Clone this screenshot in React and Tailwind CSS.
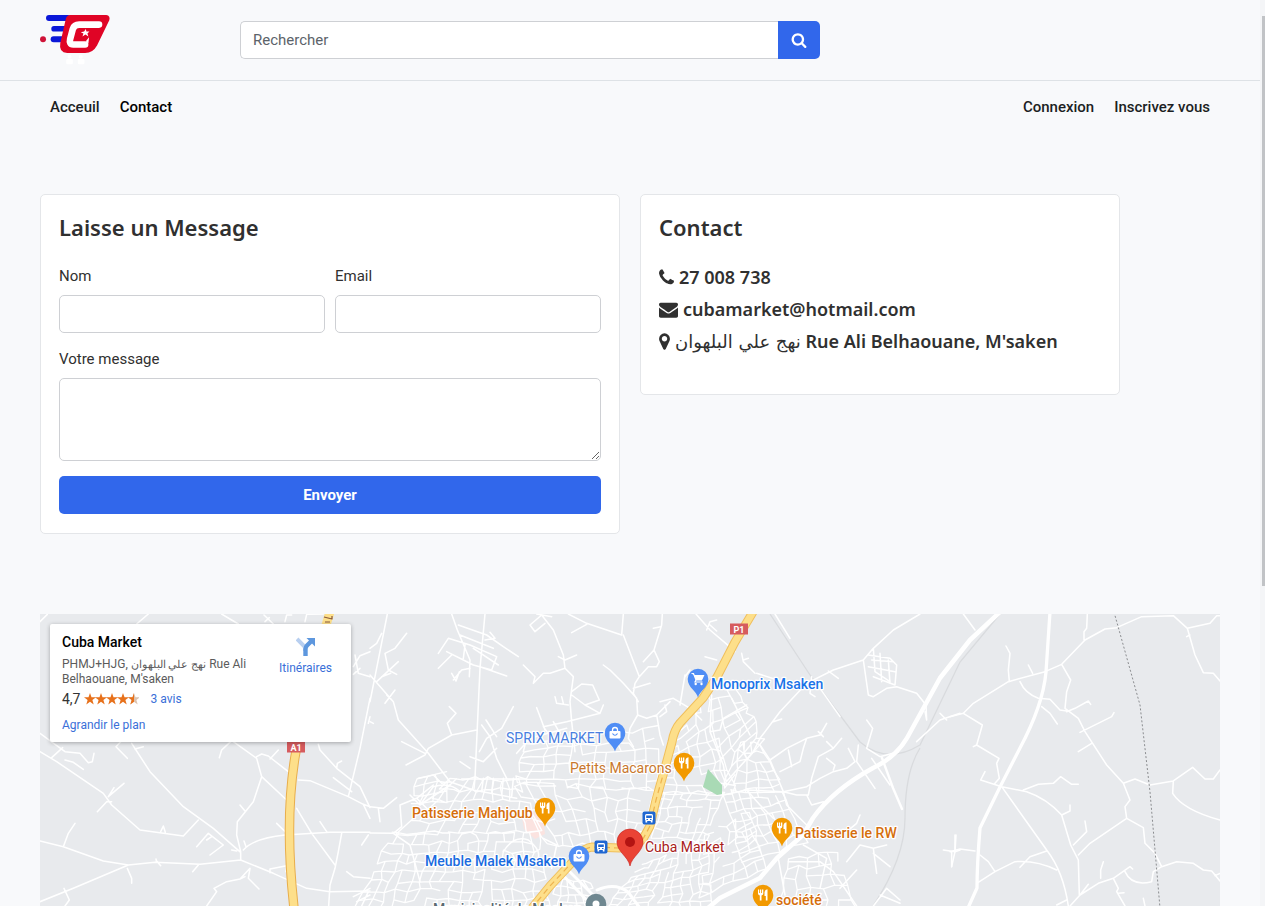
import React from "react";

const ICONS = {
  search: {
    box: "0 0 1792 1792",
    d: "M1216 832q0-185-131.500-316.500t-316.500-131.500-316.500 131.500-131.500 316.500 131.500 316.500 316.500 131.500 316.500-131.500 131.500-316.500zm512 832q0 52-38 90t-90 38q-54 0-90-38l-343-342q-179 124-399 124-143 0-273.500-55.500t-225-150-150-225-55.500-273.500 55.500-273.500 150-225 225-150 273.500-55.500 273.500 55.500 225 150 150 225 55.500 273.500q0 220-124 399l343 343q37 37 37 90z",
  },
  phone: {
    box: "192 0 1408 1792",
    d: "M1600 1240q0 27-10 70.500t-21 68.500q-21 50-122 106-94 51-186 51-27 0-53-3.500t-57.500-12.500-47-14.500-55.500-20.500-49-18q-98-35-175-83-127-79-264-216t-216-264q-48-77-83-175-3-9-18-49t-20.500-55.500-14.500-47-12.500-57.500-3.500-53q0-92 51-186 56-101 106-122 25-11 68.500-21t70.500-10q14 0 21 3 18 6 53 76 11 19 30 54t35 63.500 31 53.500q3 4 17.500 25t21.500 35.500 7 28.500q0 20-28.500 50t-62 55-62 53-28.500 46q0 9 5 22.500t8.500 20.500 14 24 11.500 19q76 137 174 235t235 174q2 1 19 11.500t24 14 20.500 8.500 22.500 5q18 0 46-28.500t53-62 55-62 50-28.500q14 0 28.500 7t35.500 21.500 25 17.500q25 15 53.500 31t63.500 35 54 30q70 35 76 53 3 7 3 21z",
  },
  envelope: {
    box: "0 0 1792 1792",
    d: "M1792 710v794q0 66-47 113t-113 47h-1472q-66 0-113-47t-47-113v-794q44 49 101 87 362 246 497 345 57 42 92.500 65.500t94.500 48 110 24.500h2q51 0 110-24.500t94.500-48 92.500-65.500q170-123 498-345 57-39 100-87zm0-294q0 79-49 151t-122 123q-376 261-468 325-10 7-42.500 31t-54 38.500-52 32.500-57.500 27-50 9h-2q-23 0-50-9t-57.500-27-52-32.500-54-38.500-42.500-31q-91-64-262-182.500t-205-142.500q-62-42-117-115.500t-55-136.500q0-78 41.500-130t118.500-52h1472q65 0 112.500 47t47.500 113z",
  },
  marker: {
    box: "0 0 1024 1792",
    d: "M768 640q0 106-75 181t-181 75-181-75-75-181 75-181 181-75 181 75 75 181zm256 0q0 109-33 179l-364 774q-16 33-47.500 52t-67.500 19-67.500-19-46.500-52l-365-774q-33-70-33-179 0-212 150-362t362-150 362 150 150 362z",
  },
};

function Icon({ name, className }) {
  return (
    <svg viewBox={ICONS[name].box} className={className} fill="currentColor" fillRule="evenodd" aria-hidden="true">
      <path d={ICONS[name].d} />
    </svg>
  );
}

function Logo() {
  return (
    <svg viewBox="12 18 214 160" className="h-[53px] w-[71px]" role="img" aria-label="Cuba Market">
      <g fill="#0b18d8">
        <rect x="30" y="21" width="75" height="18" rx="9" />
        <rect x="46" y="54" width="50" height="17" rx="8" />
        <rect x="44" y="85" width="50" height="18" rx="9" />
      </g>
      <circle cx="21" cy="94" r="9" fill="#cf1237" />
      <path d="M102 21H212Q225 23 221 37L184 113Q172 135 148 136H94Q68 134 73 106L89 36Q91 22 102 21Z" fill="#e00425" />
      <path d="M190 50H130Q115 50 111 63L103 93Q99 110 112 110H148" fill="none" stroke="#fff" strokeWidth="20" strokeLinecap="round" strokeLinejoin="round" />
      <path d="M150 100L160 88L158 106Z" fill="#fff" />
      <path d="M150 63L152 71L161 71L155 77L158 86L149 80L140 86L143 77L135 73L145 71Z" fill="#fff" />
      <g fill="#fff">
        <circle cx="101" cy="147" r="6" />
        <circle cx="135" cy="147" r="6" />
        <rect x="91" y="154" width="20" height="16" rx="4" />
        <rect x="126" y="154" width="20" height="16" rx="4" />
      </g>
    </svg>
  );
}

/* Street mesh: a jittered grid stretched over a quadrilateral. */
function mesh([a, b, c, d], cols, rows, seed) {
  const rand = (i, j, k) => {
    const s = Math.sin(i * 127.1 + j * 311.7 + k * 74.7 + seed * 53.3) * 43758.5453;
    return s - Math.floor(s);
  };
  const at = (i, j) => {
    const u = (i + (rand(i, j, 1) - 0.5) * 0.5) / cols;
    const v = (j + (rand(i, j, 2) - 0.5) * 0.5) / rows;
    const mix = (n) => (1 - v) * ((1 - u) * a[n] + u * b[n]) + v * ((1 - u) * d[n] + u * c[n]);
    return mix(0).toFixed(1) + " " + mix(1).toFixed(1);
  };
  let path = "";
  for (let i = 0; i <= cols; i++) {
    for (let j = 0; j <= rows; j++) {
      if (i < cols && rand(i, j, 3) > 0.14) path += "M" + at(i, j) + "L" + at(i + 1, j);
      if (j < rows && rand(i, j, 4) > 0.26) path += "M" + at(i, j) + "L" + at(i, j + 1);
    }
  }
  return path;
}

const STREETS = [
  mesh([[450, 778], [520, 780], [540, 832], [396, 834]], 11, 5, 1),
  mesh([[390, 834], [540, 832], [548, 910], [356, 910]], 17, 8, 2),
  mesh([[524, 744], [656, 728], [658, 790], [514, 784]], 11, 6, 3),
  mesh([[514, 784], [658, 790], [640, 842], [548, 846]], 11, 5, 4),
  mesh([[676, 730], [706, 690], [735, 795], [658, 792]], 5, 9, 5),
  mesh([[706, 690], [738, 690], [762, 742], [724, 792]], 3, 9, 6),
  mesh([[658, 792], [724, 792], [706, 842], [645, 836]], 8, 6, 7),
  mesh([[724, 792], [778, 786], [806, 842], [742, 862]], 7, 7, 8),
  mesh([[706, 836], [748, 812], [768, 868], [700, 896]], 6, 6, 9),
  mesh([[640, 866], [706, 838], [712, 910], [604, 910]], 10, 8, 10),
  mesh([[788, 858], [836, 852], [856, 910], [782, 910]], 5, 5, 11),
  mesh([[740, 740], [760, 745], [784, 790], [735, 792]], 4, 5, 12),
  mesh([[556, 878], [590, 882], [606, 910], [548, 910]], 6, 4, 13),
  mesh([[418, 778], [445, 772], [450, 800], [408, 806]], 3, 3, 14),
].join("");

const WEST =
  "M0 440L50 470L190 565L215 600L300 675L430 693L475 645M0 385L75 440L120 445L145 473L157 470L162 445M75 465L100 472L130 493M35 458L68 428M275 415L330 500L430 605L520 670L602 742V765M242 410L228 425L262 460M285 432L310 425M172 620L200 590M205 575L252 535M205 575L222 548M200 590H215M0 708L70 725L190 768L265 780L345 772L480 778L602 765L700 805L800 850L870 860L990 858M265 780L100 850L0 890M262 790L275 820V835M72 850L88 885L75 903M70 725L85 685L105 655M602 740L590 690L592 650L640 590L665 515L650 460L580 410M538 458L545 435L572 410M650 455L665 447L685 453L745 500M690 462L715 435M665 515L740 585M770 610L815 685L885 780M905 685L895 740L885 790L870 840L866 903M610 735Q640 700 735 690L870 682H990M775 525L810 527L925 575L970 598L990 605M925 575L960 430L990 280M835 418L840 435L890 490L960 545L990 608M880 518L935 560M890 490L892 475L905 468M970 598L990 640M500 903L530 860L522 850L560 830L600 822L630 790L625 820L657 852M600 822L615 815M690 803V792L740 782L738 800M470 725L505 685L550 720L510 750M500 705L515 695M458 800L475 780M348 762L350 772M362 680L370 663L376 682M710 655L738 682M840 650L860 680M600 600L615 618M590 738L575 735M612 708L618 725M0 50L22 28M290 57L325 27M545 27L595 57M672 30L700 57M675 50L688 38M735 50L740 30L755 30M795 50L800 28L850 27M945 150L955 205L990 215M940 185L960 152L990 140M940 208L960 190M990 335L985 355M965 720L985 690M940 875L990 850M950 890L990 870M965 903L985 860M920 800L940 815L990 820M362 782L350 768";

const CENTRE =
  "M52 27L15 215L0 290M110 85L75 130L45 145L55 195L80 208M20 230L85 170M35 215L62 205M45 295L75 255M50 270L65 285M0 210L70 290L85 345L175 445L240 530L310 555L440 580M0 130L20 115L35 85M345 27L330 190L315 520L312 550M245 27L262 75L300 165L298 215M265 60L350 90L400 125L445 155M205 145L235 100L300 120L380 155L365 195L310 180L230 140M205 190L245 150M250 225L275 195L300 190M270 90L370 130M330 185L410 213M245 205L258 228L268 200M360 82L375 100L345 105M310 130L385 180M285 120L280 160M480 60L515 30L550 75L580 150L585 190L610 215L600 290L605 350L615 440M480 60L495 80L525 55M500 27L545 35M585 190L540 205L520 205L490 235L495 215L460 180M565 155L585 165L620 150M605 260L635 237L668 240L688 285L645 300L605 270M645 300L690 325L590 350L520 365M690 325L700 300M595 27L650 55L755 90L760 27M605 83L650 58M760 90L808 215M877 27L875 60L852 135L868 170L860 185L835 185L808 215L795 235L790 265L805 290M852 135L820 170M850 70L872 65M700 180L720 195L760 235L800 280L803 330L780 370L775 400L790 425M790 250L840 235M555 275L560 295L595 300M575 275L580 295M430 305L395 370L350 400L328 440M238 305L258 325L232 355L245 390L175 430L165 450L108 480M95 410L165 445M245 390L320 375M335 360L360 395L380 460L410 520M300 455L340 470L380 430M348 345L380 395M275 522H470M145 520L190 510L215 535L240 530M270 470L300 490M0 605L40 610L80 578M0 684L70 685L95 665L90 600L140 580L190 540M30 650L25 610M70 685L120 720L150 830M0 350L10 355M803 330L830 340L860 330L900 290M860 330L870 390L880 420M500 308L512 340M512 340L525 375M120 570L150 600L190 545Q240 530 270 560M150 600L240 540M140 580L180 620M400 740Q430 690 475 705Q520 740 500 770M520 700L560 720L545 790M440 445L480 400L590 370M470 400L460 440M520 365L545 400M550 350L570 385M340 520L335 560M370 520L365 565M400 520L395 570M430 520L425 575";

const EAST =
  "M780 27L700 75L640 130L610 165L520 195L440 235L360 320L300 400L280 440L190 540M345 27L390 100M455 215L450 265L465 275M505 198L535 220M480 250L540 335M610 165L625 270L640 275L680 250L710 245L770 265L798 300L800 345M625 150L690 160L710 180L705 240L640 215M640 130L645 200L690 230M660 145L665 230M625 185L705 200M635 165L700 170M685 165L690 235M800 345L795 320M900 325L840 345L770 410M840 325L860 345M620 345L638 370L620 430L660 455L715 440M340 350L365 342M108 27L150 75L215 130L225 140M140 75L150 50L170 45M150 60L170 78M135 155L170 165M245 145L250 170L285 205M250 165L265 160M290 205L400 240M75 215L90 195M75 210L60 300M0 290L40 280L90 310L125 345M0 335L20 320L15 300M155 270L150 380L190 480L200 540M150 380L180 375L190 340L260 300M215 280L270 390M260 300L225 320M300 420L330 465L370 560M330 465L380 430L440 400L480 390L500 355M475 380L490 395M360 500L420 470L430 430L440 400M385 435L395 485M455 520L475 455L520 430L545 400M500 460L525 480L520 495M520 430L500 410M370 560L440 545L480 520L520 500L560 490L585 470L565 430M595 420L590 470L645 550M440 570L455 600L490 590M370 560L410 570L445 570L455 520M635 460L690 540M190 570L260 555L370 560L380 600L440 660M260 555L300 600L340 640M600 630L590 655L560 680M560 770L600 720L640 730L680 720M640 730L650 805M640 745L690 785M355 760L375 870M385 770L480 770L520 800L590 903M430 720L500 760L480 850M590 795L540 850M640 903L680 850L720 885M850 735L885 740L875 785M885 690V740L900 735M660 870L720 895";

const FAR_EAST =
  "M40 27L75 75M0 335L40 325L70 295L175 230L285 200L335 178L405 105L465 72L500 68L575 35L670 32L712 70L780 55L800 32H810M412 27L410 70L402 80V105M168 123L180 145L175 195L178 230M235 180L248 205M210 230Q225 265 265 280L300 283L330 315L350 318M335 178L362 225L350 260L345 310L385 340L405 380L470 480L520 535L555 522L600 540L670 528L728 487L765 522L790 522L810 495M350 320L375 310L415 288L422 298M390 382L485 335L492 323M385 440L425 415M275 305L300 325L322 357M40 325L97 360L80 420L70 425M80 420L147 460L140 475L148 520L135 535M105 500L92 525L155 545L230 560Q290 580 335 630L360 618V600M220 555L265 538L310 535L332 515L365 538H385M155 545L290 735Q340 800 355 903M335 630L362 720L385 765L388 870M405 648L410 680L370 720M385 750L420 715L530 640M520 535L540 585L525 605L530 640L580 668L585 715L615 745L635 785L680 770L730 775L760 795L785 798L810 828M795 812L810 805M670 528L668 565Q700 615 810 645M712 70L735 150L760 203L790 205L810 228M710 95L720 90M80 835L135 800L195 770Q260 765 320 795M210 787L240 755L290 738M90 750L115 770L135 800M0 740L30 732L75 738M18 690L15 740M5 785V740M360 903L390 870L445 835L490 820L540 785L548 792M490 820L505 850L500 860L525 903M505 865L522 863M460 770L452 795V820M525 800Q545 845 605 830L610 800L635 785M320 900L350 885M390 870L415 838M580 880L585 903";

const LABELS = [
  ["Monoprix Msaken", 711, 689, "#1a73e8", 500],
  ["SPRIX MARKET", 506, 743, "#4a7fe0", 400],
  ["Petits Macarons", 570, 773, "#c8772d", 400],
  ["Patisserie Mahjoub", 412, 818, "#d56e0c", 500],
  ["Meuble Malek Msaken", 425, 866, "#1a6be0", 500],
  ["Cuba Market", 645, 852, "#a8201a", 400],
  ["Patisserie le RW", 795, 838, "#d56e0c", 500],
  ["société", 776, 905, "#d56e0c", 500],
  ["Municipalité de Msaken", 433, 914, "#5b6a72", 500],
];

const PINS = [
  ["cart", 698, 679],
  ["bag", 615, 733],
  ["food", 684, 763],
  ["food", 545, 808],
  ["bag", 579, 856],
  ["food", 782, 828],
  ["food", 763, 895],
  ["dot", 596, 904],
];

const PIN_FILL = { cart: "#4f8df5", bag: "#4f8df5", food: "#f29900", dot: "#6f8790" };

function Pin({ kind, x, y }) {
  return (
    <g transform={`translate(${x} ${y})`}>
      <path d="M0 18.500C-1.500 12-10.300 8.500-10.300 0A10.300 10.300 0 1 1 10.300 0C10.300 8.500 1.500 12 0 18.500Z" fill={PIN_FILL[kind]} />
      {kind === "food" && (
        <g fill="#fff">
          <path d="M-5-5.500H-3.800V-2H-3V-5.500H-1.800V-2H-1V-5.500H.3V-1.500Q.3 0-1.500.4V5.500H-3.200V.4Q-5 0-5-1.500Z" />
          <path d="M4.500-5.800V5.500H2.800V1H1.500V-3Q2-5.500 4.500-5.800Z" />
        </g>
      )}
      {kind === "bag" && (
        <g>
          <rect x="-5.500" y="-2" width="11" height="7.500" rx="1" fill="#fff" />
          <path d="M-2.500-1V-3A2.500 2.500 0 0 1 2.500-3V-1" fill="none" stroke="#fff" strokeWidth="1.300" />
          <path d="M-2.500 .5Q0 4 2.500 .5" fill="none" stroke="#4f8df5" strokeWidth="1.200" />
        </g>
      )}
      {kind === "cart" && (
        <g>
          <path d="M-6.500-5.500H-4.500L-2 1H3.500L5.500-3.500H-3.500" fill="#fff" stroke="#fff" strokeWidth="1.200" />
          <path d="M-2 1L-3 3H4.500" fill="none" stroke="#fff" strokeWidth="1.200" />
          <circle cx="-2.300" cy="5" r="1.200" fill="#fff" />
          <circle cx="3.500" cy="5" r="1.200" fill="#fff" />
        </g>
      )}
      {kind === "dot" && <circle r="3.500" fill="#fff" />}
    </g>
  );
}

function BusStop({ x, y }) {
  return (
    <g transform={`translate(${x} ${y})`}>
      <rect x="-6.500" y="-6.500" width="13" height="13" rx="2" fill="#1f67d2" />
      <rect x="-4" y="-4" width="8" height="7" rx="1.500" fill="#fff" />
      <path d="M-2.800-2.500H2.800V0H-2.800ZM-2.500 1H-1V2H-2.500ZM1 1H2.500V2H1Z" fill="#1f67d2" />
      <path d="M-3.500 3H-1.800V4.500H-3.500ZM1.800 3H3.500V4.500H1.800Z" fill="#fff" />
    </g>
  );
}

function RoadBadge({ x, y, children }) {
  return (
    <g transform={`translate(${x} ${y})`}>
      <rect x="-9" y="-5.500" width="18" height="11" fill="#d65b5e" />
      <text y="3.500" textAnchor="middle" fill="#fff" fontSize="9" fontWeight="700">
        {children}
      </text>
    </g>
  );
}

const P1_NORTH = "M753 612L735 642L717 677L703 698L680 723Q674 730 672 742L665 768";
const P1_SOUTH = "M665 768L656 800L650 826L643 839Q636 847 620 848L592 847Q584 848 578 856L550 886L532 908";
const A1_ROAD = "M296 751Q284 818 294 908";

function MapCanvas() {
  return (
    <svg
      viewBox="40 614 1180 292"
      preserveAspectRatio="xMidYMin slice"
      className="block size-full font-[Roboto,sans-serif]"
      role="img"
      aria-label="Plan de Msaken"
    >
      <rect x="40" y="614" width="1180" height="600" fill="#e8eaed" />
      <path d="M522 818L533 811L543 820L545 834L535 839L524 829Z" fill="#fbe3e0" />
      <g fill="none" stroke="#d9dbde" strokeWidth="1.300">
        <path d="M770 614L810 675L860 742Q887 765 920 745L960 662L1000 614" />
        <path d="M920 748Q905 772 905 818Q905 858 873 906" />
      </g>
      <g fill="none" stroke="#fff" strokeLinecap="round" strokeLinejoin="round">
        <path d={STREETS} strokeWidth="1.300" />
        <g strokeWidth="4.600">
          <path d={WEST} transform="translate(40 605) scale(.33333)" />
          <path d={CENTRE} transform="translate(370 605) scale(.33333)" />
          <path d={EAST} transform="translate(660 605) scale(.33333)" />
          <path d={FAR_EAST} transform="translate(950 605) scale(.33333)" />
        </g>
        <path d="M1000 612L970 640L940 678L907 738Q896 757 873 768Q833 790 813 818L803 835L777 858L760 878L720 898L708 908" strokeWidth="4.500" />
        <path d="M1050 612L1046 672Q1043 705 1020 748L1000 787L980 828Q977 865 977 888L968 908" strokeWidth="3.300" />
        <path d="M882 758L893 788L902 809" strokeWidth="2.400" />
        <path d="M560 872L592 906M566 868L600 902" strokeWidth="3" />
        <path d="M597 890Q615 882 628 892L640 908" strokeWidth="3" />
      </g>
      <path d="M708 769L722 785V794L717 795L703 787Z" fill="#a9dab5" />
      <path d="M1114 612L1140 705L1150 792L1160 908" fill="none" stroke="#8b8d90" strokeWidth="1" strokeDasharray="2 2" />
      <g fill="none" strokeLinejoin="round">
        <path d={A1_ROAD} stroke="#e8ae4c" strokeWidth="9.500" />
        <path d={A1_ROAD} stroke="#fddf8a" strokeWidth="7.500" />
        <path d="M330 612L326 625" stroke="#fddf8a" strokeWidth="9" />
        <path d="M324 617L332 619V616M325 622L330 622" stroke="#8a5a3c" strokeWidth="1.200" />
        <path d={P1_NORTH + P1_SOUTH.slice(8)} stroke="#f0bf5c" strokeWidth="9" />
        <path d={P1_NORTH + P1_SOUTH.slice(8)} stroke="#fddf8a" strokeWidth="7" />
        <path d={P1_SOUTH} stroke="#eeb24e" strokeWidth="1.200" strokeDasharray="6 4" />
      </g>
      <RoadBadge x={739} y={629}>P1</RoadBadge>
      <RoadBadge x={296} y={747}>A1</RoadBadge>
      <BusStop x={649} y={818} />
      <BusStop x={601} y={847} />
      {PINS.map(([kind, x, y]) => (
        <Pin key={x} kind={kind} x={x} y={y} />
      ))}
      <path d="M630 866C628 856 617 852 617 842A13 13 0 1 1 643 842C643 852 632 856 630 866Z" fill="#ea4335" stroke="#c5221f" strokeWidth=".6" />
      <circle cx="630" cy="842" r="5" fill="#b31412" />
      <g fontSize="14" stroke="#fff" strokeWidth="2.500" strokeLinejoin="round" paintOrder="stroke">
        {LABELS.map(([label, x, y, fill, weight]) => (
          <text key={label} x={x} y={y} fill={fill} fontWeight={weight}>
            {label}
          </text>
        ))}
      </g>
    </svg>
  );
}

const STAR = "M6 0L7.500 4.300H12L8.400 7L9.700 11.400L6 8.700L2.300 11.400L3.600 7L0 4.300H4.500Z";

function Rating() {
  return (
    <svg viewBox="0 0 55 12" className="h-3 w-[55px]" role="img" aria-label="4,7 sur 5">
      {[0, 11, 22, 33].map((x) => (
        <path key={x} d={STAR} transform={`translate(${x} 0)`} fill="#e7711b" />
      ))}
      <path d={STAR} transform="translate(44 0)" fill="#dcc3b0" />
      <path d="M50 0V8.700L46.300 11.400L47.600 7L44 4.300H48.500Z" fill="#e7711b" />
    </svg>
  );
}

function PlaceCard() {
  return (
    <div className="absolute top-[10px] left-[10px] flex w-[301px] justify-between rounded-[2px] bg-white pt-[9px] pb-[10px] pr-[19px] pl-3 text-xs leading-[14px] text-[#5b5b5b] shadow-[0_1px_4px_rgba(0,0,0,0.3)]">
      <div className="w-[200px]">
        <h3 className="text-sm leading-[18px] font-medium text-black">Cuba Market</h3>
        <p className="mt-[6px]">
          PHMJ+HJG, <span className="text-[11px]">نهج علي البلهوان</span> Rue Ali Belhaouane, M'saken
        </p>
        <div className="mt-[5px] flex h-4 items-center">
          <span className="text-sm leading-4 text-[#333]">4,7</span>
          <span className="ml-[3px]">
            <Rating />
          </span>
          <a href="#avis" className="ml-3 text-[#3a6fd8]">3 avis</a>
        </div>
        <a href="#plan" className="mt-[11px] block text-[#3a6fd8]">Agrandir le plan</a>
      </div>
      <a href="#itineraires" className="flex flex-col items-center gap-1 self-start pt-1 text-[#3a6fd8]">
        <svg viewBox="0 0 20 20" className="size-5" aria-hidden="true">
          <path d="M1 2L9 10V14" fill="none" stroke="#b8cff0" strokeWidth="4" />
          <path d="M9.500 19V12Q9.500 10 11 8.500L15 4.500" fill="none" stroke="#5d97de" strokeWidth="4.400" />
          <path d="M10.500 1H19V9.500Z" fill="#5d97de" />
        </svg>
        Itinéraires
      </a>
    </div>
  );
}

const FIELD = "block w-full rounded-[5px] border border-[#ced0d4] bg-white px-3 outline-none";

function Field({ id, label, type }) {
  return (
    <div>
      <label htmlFor={id} className="mb-[7px] block leading-6">
        {label}
      </label>
      <input id={id} type={type} className={`${FIELD} h-[38px]`} />
    </div>
  );
}

const CARD = "rounded-[5px] border border-[#e4e6e9] bg-white px-[18px] pt-[18px]";
const CARD_TITLE = "font-['Noto_Sans',sans-serif] text-[22px] leading-7 font-semibold";

export default function App() {
  return (
    <div className="flex h-screen overflow-hidden bg-[#f8f9fb] font-[Roboto,sans-serif] text-[15px] text-[#303030]">
      <div className="flex min-w-0 flex-1 flex-col">
        <header className="border-b border-[#dee2e6] px-10">
          <div className="grid h-20 grid-cols-6 gap-5">
            <a href="#accueil" className="pt-[14px]">
              <Logo />
            </a>
            <form className="col-span-3 flex items-center" role="search">
              <input
                type="search"
                aria-label="Rechercher"
                placeholder="Rechercher"
                className="h-[38px] min-w-0 flex-1 rounded-l-[5px] border border-r-0 border-[#ced0d4] bg-white px-3 outline-none placeholder:text-[#5c636a]"
              />
              <button type="button" aria-label="Lancer la recherche" className="flex h-[38px] w-[42px] items-center justify-center rounded-r-[5px] bg-[#3167eb] text-white">
                <Icon name="search" className="size-4" />
              </button>
            </form>
          </div>
        </header>

        <nav className="flex justify-between px-[50px] pt-[14px] font-medium leading-6 text-[#1c1f23]">
          <div className="flex gap-5">
            <a href="#accueil">Acceuil</a>
            <a href="#contact" className="text-black">Contact</a>
          </div>
          <div className="flex gap-5">
            <a href="#connexion">Connexion</a>
            <a href="#inscription">Inscrivez vous</a>
          </div>
        </nav>

        <main className="flex min-h-0 flex-1 flex-col px-10 pt-[75px]">
          <div className="grid grid-cols-12 items-start gap-5">
            <section className={`${CARD} col-span-6 pb-[19px]`}>
              <h2 className={`${CARD_TITLE} mb-[23px]`}>Laisse un Message</h2>
              <form>
                <div className="grid grid-cols-2 gap-[10px]">
                  <Field id="nom" label="Nom" type="text" />
                  <Field id="email" label="Email" type="email" />
                </div>
                <label htmlFor="message" className="mt-[14px] mb-[7px] block leading-6">
                  Votre message
                </label>
                <textarea id="message" className={`${FIELD} h-[83px] resize-y`} />
                <button type="button" className="mt-[15px] block h-[38px] w-full rounded-[5px] bg-[#3167eb] font-bold text-white">
                  Envoyer
                </button>
              </form>
            </section>

            <section className={`${CARD} col-span-5 pb-[37px]`}>
              <h2 className={`${CARD_TITLE} mb-5`}>Contact</h2>
              <ul className="font-['Noto_Sans',sans-serif] text-lg leading-8 font-semibold">
                <li className="flex items-center gap-[5px]">
                  <Icon name="phone" className="h-[19px] w-[15px]" />
                  27 008 738
                </li>
                <li className="flex items-center gap-[5px]">
                  <Icon name="envelope" className="size-[19px]" />
                  cubamarket@hotmail.com
                </li>
                <li className="flex h-8 items-center gap-[5px]">
                  <Icon name="marker" className="h-[19px] w-[11px]" />
                  <span>
                    <span className="font-['DejaVu_Sans',sans-serif] font-normal">نهج علي البلهوان</span> Rue Ali Belhaouane, M'saken
                  </span>
                </li>
              </ul>
            </section>
          </div>

          <section className="relative mt-20 min-h-0 flex-1 overflow-hidden" aria-label="Carte">
            <MapCanvas />
            <PlaceCard />
          </section>
        </main>
      </div>

      <div className="flex w-[5px] shrink-0 flex-col items-end bg-[#f4f5f7] pt-4" aria-hidden="true">
        <div className="h-[64%] w-[3px] bg-[#c1c3c6]" />
      </div>
    </div>
  );
}
